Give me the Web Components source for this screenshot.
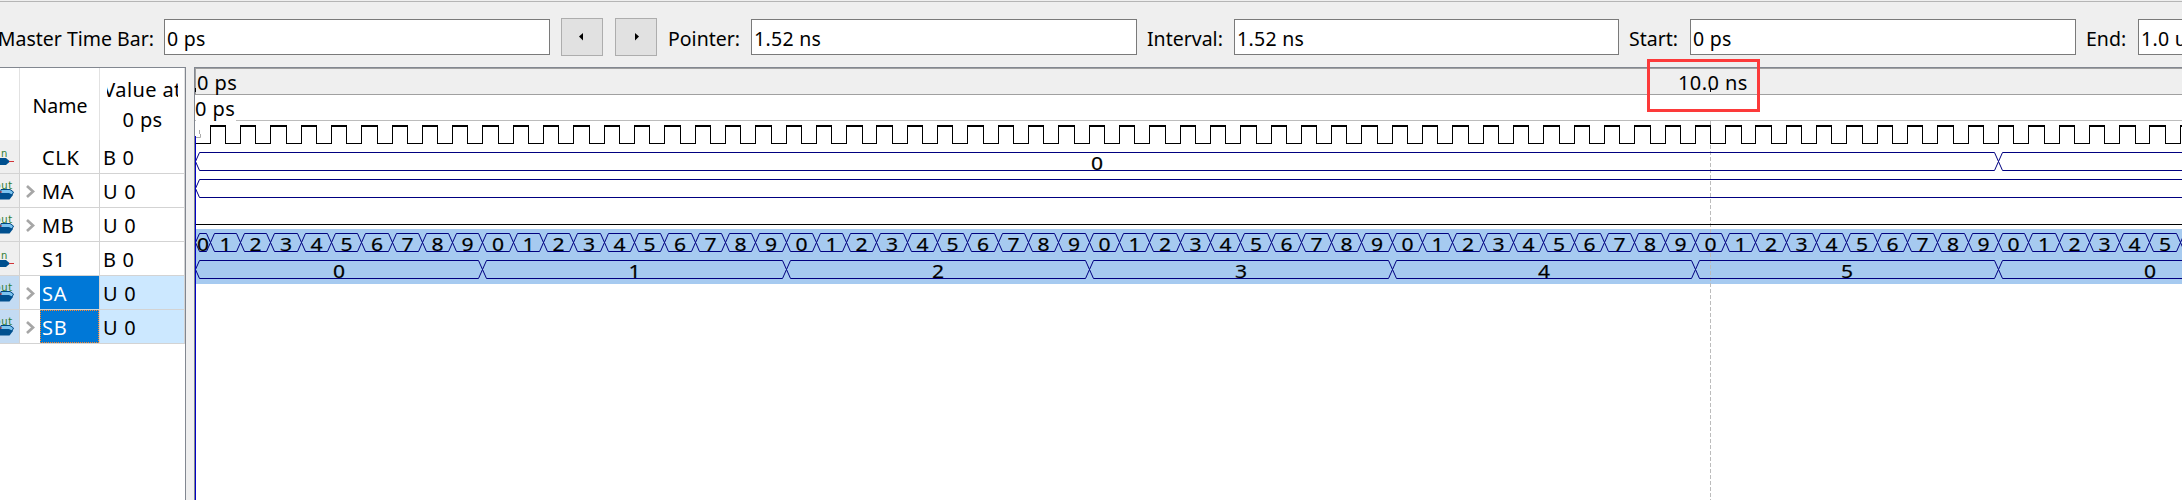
<!DOCTYPE html>
<html lang="en"><head><meta charset="utf-8"><title>Waveform editor</title>
<style>
html,body{margin:0;height:500px;overflow:hidden;background:#efefef;font:20px/26px "Noto Sans","Open Sans",sans-serif;color:#000}
</style></head><body>
<wave-app></wave-app>
<script>
class TimeField extends HTMLElement{
  constructor(){super();this.attachShadow({mode:'open'}).innerHTML=`<style>
  :host{display:block;box-sizing:border-box;width:386px;height:36px;border:1px solid #7a7a7a;background:#fff;padding:6px 0 0 2px;white-space:nowrap;flex:none;overflow:hidden;font-size:19.5px;letter-spacing:.3px}
  </style><slot></slot>`}
}
customElements.define('time-field',TimeField);

class StepButton extends HTMLElement{
  constructor(){super();const next=this.getAttribute('dir')==='next';this.attachShadow({mode:'open'}).innerHTML=`<style>
  :host{display:flex;box-sizing:border-box;width:42px;height:38px;border:1px solid #adadad;background:#e1e1e1;align-items:center;justify-content:center;flex:none}
  svg{display:block}</style><svg width="6" height="8" viewBox="0 0 6 8"><path d="${next?'M2 0L6 3.5L2 7.500Z':'M4 0L0 3.5L4 7.500Z'}"/></svg>`}
}
customElements.define('step-button',StepButton);

class TimeBar extends HTMLElement{
  constructor(){super();this.attachShadow({mode:'open'}).innerHTML=`<style>
  :host{display:flex;box-sizing:border-box;height:67px;padding-top:18px;align-items:flex-start;background:linear-gradient(#b5b5b5,#b5b5b5) 0 1px/100% 1px no-repeat #efefef;overflow:hidden}
  span{display:block;flex:none;box-sizing:border-box;padding-top:8px;white-space:nowrap;font-size:19.5px}
  time-field{margin-top:1px}
  .m{width:164px;display:flex;justify-content:flex-end;padding-right:10px}
  .a{margin-left:11px}.b{margin:0 10px 0 12px}
  </style><span class="m">Master Time Bar:</span><time-field>0 ps</time-field>
  <step-button class="a" dir="prev"></step-button><step-button class="b" dir="next"></step-button>
  <span style="width:84px;padding-left:1px">Pointer:</span><time-field>1.52 ns</time-field>
  <span style="width:97px;padding-left:10px">Interval:</span><time-field style="width:385px">1.52 ns</time-field>
  <span style="width:71px;padding-left:10px">Start:</span><time-field>0 ps</time-field>
  <span style="width:62px;padding-left:10px">End:</span><time-field>1.0 us</time-field>`}
}
customElements.define('time-bar',TimeBar);

class PinIcon extends HTMLElement{
  constructor(){super();const out=this.getAttribute('kind')==='out';
  this.attachShadow({mode:'open'}).innerHTML=`<style>:host{display:block;width:19px;height:33px;overflow:hidden}svg{display:block}text{font:10px "DejaVu Sans",sans-serif;fill:#2e7d32}</style>
  <svg width="19" height="33" viewBox="0 0 19 33">${out?
  '<path d="M1 15.500H10L13.500 18L12 21H0Z" fill="#7cc4f0" stroke="#004a86"/><path d="M0 19H9L13 21L9.500 25.500H0Z" fill="#00508f"/><path d="M0 18H2" stroke="#d13438"/><text x="-5.500" y="15">out</text>':
  '<text x="1" y="17">n</text><path d="M0 18H6L10 21.500L6 25H0Z" fill="#00508f"/><path d="M9 21.500H14" stroke="#d13438"/>'}</svg>`}
}
customElements.define('pin-icon',PinIcon);

class SignalRow extends HTMLElement{
  constructor(){super();const g=n=>this.getAttribute(n),bus=g('kind')==='out';
  this.attachShadow({mode:'open'}).innerHTML=`<style>
  :host{display:grid;grid-template-columns:19px 21px 59px 86px;height:33px;border-bottom:1px solid #d3d3d3;background:#fff}
  div{box-sizing:border-box;height:33px;white-space:nowrap;padding-top:5px;letter-spacing:.7px}
  .i{background:#efefef;padding:0}.c{border-left:1px solid #d3d3d3;padding:11px 0 0 6px}
  .n{padding-left:2px}.v{border-left:1px solid #d3d3d3;border-right:1px solid #d3d3d3;padding-left:3px}
  :host([selected]) .i{background:#c3dbf3}:host([selected]) .n{background:#0078d7;color:#fff}
  :host([selected]) .v{background:#cce8ff}
  :host([focused]) .n{outline:1px dotted #ff8728;outline-offset:-1px}
  svg{display:block}
  </style><div class="i"><pin-icon kind="${g('kind')}"></pin-icon></div>
  <div class="c">${bus?'<svg width="10" height="13"><path d="M1 1L7 6.5L1 12" fill="none" stroke="#a6a6a6" stroke-width="2.7"/></svg>':''}</div>
  <div class="n">${g('name')}</div><div class="v">${g('value')}</div>`}
}
customElements.define('signal-row',SignalRow);

class SignalList extends HTMLElement{
  constructor(){super();this.attachShadow({mode:'open'}).innerHTML=`<style>
  :host{display:block;box-sizing:border-box;width:186px;height:433px;background:#fff;border-top:1px solid #828790;border-right:1px solid #828790;flex:none;overflow:hidden}
  header{display:grid;grid-template-columns:19px 80px 86px;height:72px}
  header div{box-sizing:border-box;border-left:1px solid #e2e2e2;text-align:center}
  header div:first-child{border:0}.n{padding:25px 0 0 1px;font-size:19.5px}
  .v{border-right:1px solid #e2e2e2;line-height:30px;padding:7px 6px 0 7px;letter-spacing:.4px}
  .clip{display:flex;justify-content:center;overflow:hidden;white-space:nowrap;height:30px}
  </style><header><div></div><div class="n">Name</div><div class="v"><span class="clip">Value at</span><span class="clip">0 ps</span></div></header>
  <signal-row kind="in" name="CLK" value="B 0"></signal-row>
  <signal-row kind="out" name="MA" value="U 0"></signal-row>
  <signal-row kind="out" name="MB" value="U 0"></signal-row>
  <signal-row kind="in" name="S1" value="B 0"></signal-row>
  <signal-row kind="out" name="SA" value="U 0" selected></signal-row>
  <signal-row kind="out" name="SB" value="U 0" selected focused></signal-row>`}
}
customElements.define('signal-list',SignalList);

class WaveView extends HTMLElement{
  constructor(){super();
  // Coordinates are in the window's pixels; the viewBox shifts them to the panel.
  const edge=k=>Math.round(194.5+(k-.5)*30.31), W=2182;
  let clk='M196 143.5H210.5';
  for(let k=1;edge(k)<W;k++){const r=edge(k)+.5,f=Math.round(194.7+k*30.31)+.5,n=edge(k+1)+.5;clk+=`M${r} 144V125M${f} 125V144M${f} 143.5H${n}`}
  let high='';for(let k=1;edge(k)<W;k++){high+=`M${edge(k)} 126H${Math.round(194.7+k*30.31)+1}`}
  const bus=(y,xs)=>{let d='';for(let i=0;i<xs.length-1;i++){const a=xs[i]+.5,b=xs[i+1]+.5;
    d+=`M${a+4} ${y}H${b-4}L${b} ${y+9}L${b-4} ${y+18}H${a+4}L${a} ${y+9}Z`}return d};
  const num=(x,y,t)=>`<text transform="translate(${x} ${y}) scale(1.14 1)">${t}</text>`;
  const sa=[195];for(let k=1;k<68;k++)sa.push(edge(k));
  const sb=[195];for(let k=10;k<80;k+=10)sb.push(edge(k));
  let tx=num(1097,170,'0');
  for(let i=0;i<sa.length-1&&sa[i]<W-20;i++)tx+=num((sa[i]+sa[i+1])/2+.5,251,i%10);
  for(let i=0;i<sb.length-1;i++)tx+=num(i==6?2150:(sb[i]+sb[i+1])/2+.5,278,i%6);
  this.attachShadow({mode:'open'}).innerHTML=`<style>
  :host{display:block;position:relative;box-sizing:border-box;width:1988px;height:433px;background:#fff;border-left:1px solid #828790;border-top:1px solid #828790;flex:none}
  .r{box-sizing:border-box;height:27px;background:#efefef;border-top:1px solid #a0a0a0;border-bottom:1px solid #a0a0a0;border-left:1px solid #a0a0a0;padding-left:1px;display:flex;justify-content:flex-start;line-height:27px;letter-spacing:.4px}
  .r span:first-child{width:1481px}
  .t{height:25px;display:flex;line-height:27px;letter-spacing:.4px}
  .w{display:block}
  .mark{position:absolute;left:1452px;top:-9px;box-sizing:border-box;width:113px;height:53px;border:3px solid #fc3a3a}
  .tick{position:absolute;top:20px;width:1px;height:4px;background:#000}
  text{font:18.5px "Noto Sans",sans-serif;text-anchor:middle;stroke:#000;stroke-width:.2px}
  </style><div class="r"><span>0 ps</span><span>10.0 ns</span></div><div class="t">0 ps</div>
  <svg class="w" width="1987" height="380" viewBox="195 120 1987 380">
  <rect x="195" y="229" width="1987" height="55" fill="#a6caf0"/>
  <path d="M195 120.500h1M236 120.500H2182" stroke="#bcbcbc"/>
  <path d="M1710.500 121V500" stroke="#bcbcbc" stroke-dasharray="4 2"/>
  <path d="M196 137.500H200.500V134M199.500 130V134" stroke="#aaa" fill="none"/>
  <path d="${clk}M196 224.500H2182" stroke="#000" fill="none"/><path d="${high}" stroke="#000" stroke-width="2"/>
  <path d="${bus(152.5,[195,1998,2400])}${bus(179.5,[195,2400])}${bus(233.5,sa)}${bus(260.5,sb)}" stroke="#000080" fill="none"/>
  ${tx}<path d="M195.500 136V500" stroke="#0000c8"/></svg>
  <i class="tick" style="left:0"></i><i class="tick" style="left:1515px"></i><div class="mark"></div>`}
}
customElements.define('wave-view',WaveView);

class WaveApp extends HTMLElement{
  constructor(){super();this.attachShadow({mode:'open'}).innerHTML=`<style>
  :host{display:block;width:2182px;height:500px;overflow:hidden;background:#efefef}
  main{display:flex;gap:8px}
  </style><time-bar></time-bar><main><signal-list></signal-list><wave-view></wave-view></main>`}
}
customElements.define('wave-app',WaveApp);
</script></body></html>
